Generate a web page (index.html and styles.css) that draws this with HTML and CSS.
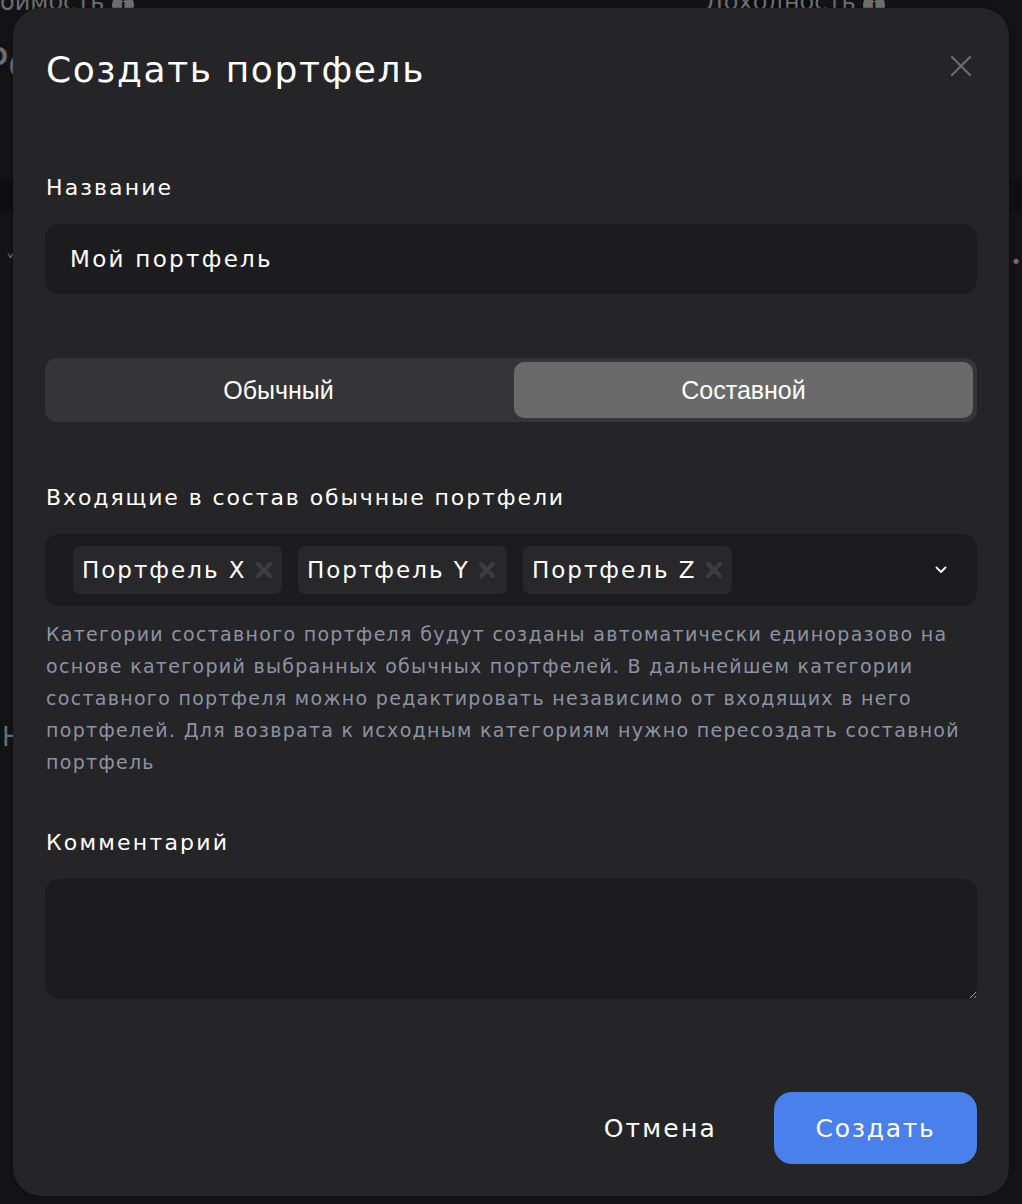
FILE: index.html
```html
<!DOCTYPE html>
<html lang="ru">
<head>
<meta charset="utf-8">
<title>Создать портфель</title>
<link rel="stylesheet" href="styles.css">
</head>
<body>
<div class="backdrop">
  <div class="bg-top">
    <span class="bg-t1">оимость <b class="bg-info">i</b></span>
    <span class="bg-gap"></span>
    <span class="bg-t2">Доходность <b class="bg-info">i</b></span>
  </div>
  <div class="bg-title">Ро</div>
  <div class="bg-band"></div>
  <div class="bg-row"><span class="bg-caret">˅</span><span class="bg-dots">•••</span></div>
  <div class="bg-letter">Н</div>
</div>

<div class="modal">
  <div class="modal-head">
    <h1 class="modal-title">Создать портфель</h1>
    <button class="close-btn" aria-label="Закрыть">
      <svg width="22" height="22" viewBox="0 0 22 22"><path d="M2 2L20 20M20 2L2 20" stroke="#6c6c6e" stroke-width="2.2" stroke-linecap="round" fill="none"/></svg>
    </button>
  </div>

  <label class="field-label label-name">Название</label>
  <div class="input">Мой портфель</div>

  <div class="segment">
    <div class="seg-item">Обычный</div>
    <div class="seg-item active">Составной</div>
  </div>

  <label class="field-label label-parts">Входящие в состав обычные портфели</label>
  <div class="multiselect">
    <div class="chips">
      <span class="chip">Портфель X<svg class="chip-x" width="18" height="18" viewBox="0 0 18 18"><path d="M3 3L15 15M15 3L3 15" stroke="#3d3d40" stroke-width="4" stroke-linecap="round"/></svg></span>
      <span class="chip">Портфель Y<svg class="chip-x" width="18" height="18" viewBox="0 0 18 18"><path d="M3 3L15 15M15 3L3 15" stroke="#3d3d40" stroke-width="4" stroke-linecap="round"/></svg></span>
      <span class="chip">Портфель Z<svg class="chip-x" width="18" height="18" viewBox="0 0 18 18"><path d="M3 3L15 15M15 3L3 15" stroke="#3d3d40" stroke-width="4" stroke-linecap="round"/></svg></span>
    </div>
    <svg class="chevron" width="12" height="8" viewBox="0 0 12 8"><path d="M1.5 1.5L6 6L10.5 1.5" stroke="#ffffff" stroke-width="1.8" fill="none" stroke-linecap="round" stroke-linejoin="round"/></svg>
  </div>
  <p class="help">Категории составного портфеля будут созданы автоматически единоразово на основе категорий выбранных обычных портфелей. В дальнейшем категории составного портфеля можно редактировать независимо от входящих в него портфелей. Для возврата к исходным категориям нужно пересоздать составной портфель</p>

  <label class="field-label label-comment">Комментарий</label>
  <textarea class="textarea"></textarea>

  <div class="actions">
    <button class="btn-cancel">Отмена</button>
    <button class="btn-primary">Создать</button>
  </div>
</div>
</body>
</html>
```
FILE: styles.css
```css
* { box-sizing: border-box; }
html, body { margin: 0; padding: 0; }
body {
  width: 1022px;
  height: 1204px;
  background: #131315;
  font-family: "DejaVu Sans", "Noto Sans", sans-serif;
  color: #fff;
  overflow: hidden;
  position: relative;
}

/* blurred page behind the dialog */
.backdrop { height: 100%; color: #6d6d70; }
.bg-top { display: flex; height: 30px; align-items: flex-start; margin-top: -12px; font-size: 24px; }
.bg-t1 { width: 747px; }
.bg-gap { width: 73px; background: #0c0c0e; height: 30px; }
.bg-t2 { flex: 1; margin-left: -115px; }
.bg-info { display: inline-block; width: 22px; height: 22px; border-radius: 50%; background: #6d6d70; color: #131315; font-size: 14px; text-align: center; line-height: 22px; }
.bg-title { margin-top: 22px; font-size: 40px; margin-left: -16px; }
.bg-band { margin-top: 93px; height: 32px; background: #0e0e10; }
.bg-row { display: flex; justify-content: space-between; margin-top: 40px; font-size: 18px; }
.bg-caret { margin-left: 6px; }
.bg-dots { margin-right: -14px; letter-spacing: 2px; }
.bg-letter { margin-top: 450px; font-size: 26px; margin-left: 2px; }

.modal {
  position: absolute;
  left: 13px;
  top: 8px;
  width: 996px;
  height: 1188px;
  background: #252527;
  border-radius: 28px;
  padding: 40px 32px 32px 32px;
  display: flex;
  flex-direction: column;
  box-shadow: 0 0 2px rgba(0,0,0,0.5);
}

.modal-head { display: flex; justify-content: space-between; align-items: center; height: 44px; }
.modal-title {
  margin: 0;
  padding-left: 1px;
  font-size: 36px;
  line-height: 44px;
  font-weight: 400;
  letter-spacing: 1.6px;
}
.close-btn { background: none; border: 0; padding: 0; margin-right: 5px; margin-top: -8px; display: flex; }

.field-label { display: block; font-size: 22px; line-height: 28px; padding-left: 1px; letter-spacing: 1.9px; color: #fff; }
.label-name { margin-top: 82px; letter-spacing: 2.1px; }
.label-parts { margin-top: 62px; }
.label-comment { margin-top: 51px; letter-spacing: 2.2px; }

.input {
  margin-top: 22px;
  height: 70px;
  background: #1c1c1e;
  border-radius: 14px;
  padding-left: 25px;
  display: flex;
  align-items: center;
  font-size: 23px;
  letter-spacing: 2.3px;
}

.segment {
  margin-top: 64px;
  height: 64px;
  background: #353538;
  border-radius: 12px;
  padding: 4px;
  display: flex;
}
.seg-item {
  flex: 1;
  display: flex;
  align-items: center;
  justify-content: center;
  font-family: "Liberation Sans", Arial, sans-serif;
  font-size: 25px;
  border-radius: 10px;
  letter-spacing: 0;
}
.seg-item:first-child { margin-right: 6px; }
.seg-item.active { background: #6a6a6b; }

.multiselect {
  margin-top: 22px;
  height: 72px;
  background: #1c1c1e;
  border-radius: 14px;
  padding: 0 30px 0 28px;
  display: flex;
  align-items: center;
  justify-content: space-between;
}
.chips { display: flex; gap: 16px; }
.chip {
  height: 48px;
  width: 209px;
  background: #28282a;
  border-radius: 7px;
  display: flex;
  align-items: center;
  padding-left: 9px;
  font-size: 23px;
  letter-spacing: 2px;
  gap: 8px;
}
.chip-x { flex: none; }
.chevron { flex: none; }

.help {
  margin: 12px 0 0 0;
  font-size: 19px;
  line-height: 32px;
  color: #8d93a3;
  letter-spacing: 1.3px;
  padding-left: 1px;
}

.textarea {
  margin-top: 22px;
  height: 120px;
  background: #1c1c1e;
  border: 0;
  border-radius: 14px;
  outline: none;
  color: #fff;
  resize: vertical;
  font-family: inherit;
  font-size: 20px;
  padding: 16px 24px;
  color-scheme: dark;
}

.actions { margin-top: 93px; display: flex; justify-content: flex-end; align-items: center; gap: 57px; }
.btn-cancel {
  background: none;
  border: 0;
  color: #fff;
  font-family: inherit;
  font-size: 25px;
  letter-spacing: 2.2px;
  padding: 0;
}
.btn-primary {
  width: 203px;
  height: 72px;
  background: #4a80ec;
  border: 0;
  border-radius: 18px;
  color: #fff;
  font-family: inherit;
  font-size: 25px;
  letter-spacing: 1.7px;
}
```
